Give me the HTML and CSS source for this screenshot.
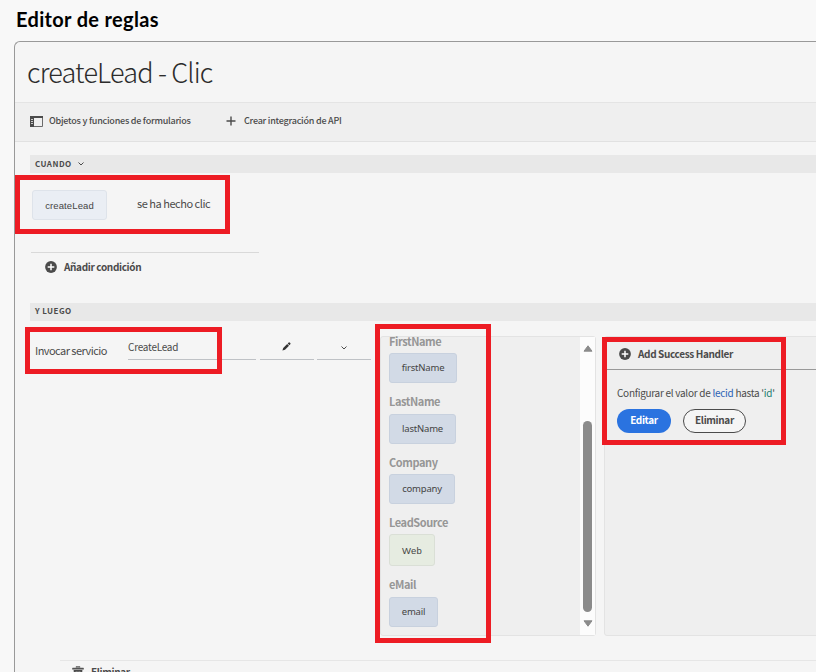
FILE: index.html
```html
<!DOCTYPE html>
<html lang="es">
<head>
<meta charset="utf-8">
<title>Editor de reglas</title>
<link rel="stylesheet" href="styles.css">
</head>
<body>
<h1 class="page-title">Editor de reglas</h1>
<main class="editor">
  <header class="rule-head"><h2 class="rule-name">createLead - Clic</h2></header>
  <nav class="toolbar">
    <a class="tool tool-objects">
      <svg width="13" height="11" viewBox="0 0 13 11"><path d="M.5.5h12v10H.5z" fill="none" stroke="#6b6b6b"/><path d="M0 0h13v2H0zM0 2h4v9H0z" fill="#4b4b4b"/><path d="M1 3.5h2M1 5.5h2M1 7.5h2" stroke="#ccc"/></svg>
      <span>Objetos y funciones de formularios</span>
    </a>
    <a class="tool tool-api">
      <svg width="10" height="10" viewBox="0 0 10 10"><path d="M5 .5v9M.5 5h9" stroke="#4b4b4b" stroke-width="1.4"/></svg>
      <span>Crear integración de API</span>
    </a>
  </nav>
  <section class="when">
    <h3 class="band">CUANDO <svg width="6" height="4" viewBox="0 0 6 4"><path d="M.5.5 3 3 5.5.5" fill="none" stroke="#4b4b4b"/></svg></h3>
    <div class="condition"><span class="chip chip-event">createLead</span><span class="event">se ha hecho clic</span></div>
    <div class="add-condition">
      <svg width="12" height="12" viewBox="0 0 12 12"><circle cx="6" cy="6" r="5.9" fill="#4b4b4b"/><path d="M6 2.7v6.6M2.7 6h6.6" stroke="#fff" stroke-width="1.5"/></svg>
      <b>Añadir condición</b>
    </div>
  </section>
  <section class="then">
    <h3 class="band band-then">Y LUEGO</h3>
    <div class="action">
      <span class="invoke">Invocar servicio</span>
      <span class="field service"><span>CreateLead</span></span>
      <span class="field small edit"><svg width="9" height="9" viewBox="0 0 9 9"><path d="M.4 8.6 1.2 6 5.2 2 7 3.8 3 7.8zM5.7 1.5 6.7.6Q7.3.1 7.9.7l.4.4q.5.5 0 1.1L7.4 3.2z" fill="#333"/></svg></span>
      <span class="field small last"><svg width="6" height="4" viewBox="0 0 6 4"><path d="M.5.5 3 3 5.5.5" fill="none" stroke="#4b4b4b"/></svg></span>
      <div class="panel inputs">
        <div class="input-list">
          <label>FirstName</label><span class="chip w1">firstName</span>
          <label class="wide">LastName</label><span class="chip w2">lastName</span>
          <label>Company</label><span class="chip w3">company</span>
          <label>LeadSource</label><span class="chip literal">Web</span>
          <label class="wide">eMail</label><span class="chip w5">email</span>
        </div>
        <div class="scrollbar">
          <svg width="10" height="7" viewBox="0 0 10 7"><path d="M5 .8 9 6.2H1z" fill="#8b8b8b" stroke="#8b8b8b" stroke-linejoin="round"/></svg>
          <i class="thumb"></i>
          <svg width="10" height="7" viewBox="0 0 10 7"><path d="M5 6.2 9 .8H1z" fill="#8b8b8b" stroke="#8b8b8b" stroke-linejoin="round"/></svg>
        </div>
      </div>
      <div class="panel handlers">
        <div class="handler-head">
          <svg width="12" height="12" viewBox="0 0 12 12"><circle cx="6" cy="6" r="5.9" fill="#4b4b4b"/><path d="M6 2.7v6.6M2.7 6h6.6" stroke="#fff" stroke-width="1.5"/></svg>
          <b>Add Success Handler</b>
        </div>
        <p class="handler-text">Configurar el valor de <span class="var">lecid</span> hasta '<span class="lit">id</span>'</p>
        <div class="buttons"><button class="btn primary">Editar</button><button class="btn outline">Eliminar</button></div>
      </div>
    </div>
    <div class="delete-row">
      <svg width="12" height="13" viewBox="0 0 12 13"><path d="M4 1.5V.6h4v.9M.5 2h11v1.3H.5z" fill="#555" stroke="#555" stroke-width=".5"/><path d="M1.6 4h8.8L9.8 13H2.2z" fill="#4b4b4b"/><path d="M4.2 5v7M6 5v7M7.8 5v7" stroke="#aaa" stroke-width=".7"/></svg>
      <b>Eliminar</b>
    </div>
  </section>
</main>
<i class="mark mark-event"></i><i class="mark mark-service"></i><i class="mark mark-inputs"></i><i class="mark mark-handler"></i>
</body>
</html>
```
FILE: styles.css
```css
* { box-sizing: border-box; }
body {
  margin: 0; width: 816px; height: 672px; overflow: hidden; position: relative;
  background: #f8f8f8; color: #4b4b4b;
  font: 10px/14px "Noto Sans CJK SC", "Noto Sans", sans-serif;
}
h1, h2, h3, p { margin: 0; }
b { letter-spacing: -.36px; }
svg { display: block; flex: none; }
.page-title { height: 41px; padding: 7px 0 0 16px; font: bold 20px/24px Lato, sans-serif; letter-spacing: .33px; color: #000; }
.editor { margin-left: 14px; height: 640px; border: 1px solid #999; border-width: 1px 0 0 1px; border-top-left-radius: 6px; background: #f5f5f5; overflow: hidden; }
.rule-head { height: 60px; padding: 14px 0 0 12px; }
.rule-name { font-weight: 300; font-size: 27px; line-height: 32px; letter-spacing: -.82px; color: #2c2c2c; }
.toolbar { height: 40px; display: flex; align-items: center; background: #efefef; border-top: 1px solid #e4e4e4; border-bottom: 1px solid #e1e1e1; padding: 0 0 2px 15px; }
.tool { display: flex; align-items: center; font-weight: 500; font-size: 9px; letter-spacing: -.23px; }
.tool-objects { width: 196px; gap: 6px; }
.tool-api { gap: 8px; }
.when { padding: 13px 0 0 15px; height: 161px; }
.band { height: 18px; background: #e8e8e8; padding: 0 0 0 5px; display: flex; align-items: center; gap: 6px; font: bold 8px/18px "Noto Sans CJK SC", sans-serif; letter-spacing: .45px; }
.band-then { padding-bottom: 2px; line-height: 16px; }
.condition { display: flex; align-items: center; padding: 17px 0 0 2px; height: 47px; }
.chip { display: flex; align-items: center; justify-content: center; height: 30px; border: 1px solid #c8d1de; border-radius: 3px; background: #d2dae6; color: #444; font: 9.5px/14px "Noto Sans", sans-serif; letter-spacing: -.2px; }
.chip-event { width: 75px; background: #eaeef4; border-color: #dee3ea; font-family: "Liberation Sans", sans-serif; letter-spacing: .12px; padding-top: 2px; }
.event { margin: -4px 0 0 30px; font-size: 11px; letter-spacing: -.47px; }
.add-condition { width: 228px; margin: 32px 0 0 1px; border-top: 1px solid #d9d9d9; padding: 7px 0 0 14px; display: flex; align-items: center; gap: 7px; }
.then { padding-left: 15px; }
.action { display: flex; margin-top: 15px; height: 300px; }
.invoke { flex: none; width: 98px; padding: 7px 0 0 5px; font-size: 11px; letter-spacing: -.55px; }
.field { flex: none; display: flex; height: 24px; border-bottom: 1px solid #bfc2c6; margin-right: 4px; letter-spacing: -.25px; }
.service { width: 128px; padding-top: 4px; }
.small { width: 54px; justify-content: center; align-items: center; margin-right: 3px; }
.edit { padding: 0 1px 2px 0; }
.last { margin-right: 9px; }
.panel { background: #efefef; border: 1px solid #e3e3e3; border-radius: 3px; height: 300px; flex: none; }
.inputs { width: 216px; display: flex; justify-content: space-between; }
.input-list { padding-left: 8px; margin-top: -14px; }
.input-list label { display: block; height: 30px; padding-top: 11px; font-weight: 700; font-size: 11px; line-height: 15px; letter-spacing: -.42px; color: #969696; }
.input-list .wide { height: 31px; }
.w1 { width: 68px; } .w2 { width: 67px; } .w3 { width: 66px; } .w5 { width: 49px; }
.literal { width: 46px; height: 32px; padding-top: 1px; background: #e6ece1; border-color: #dadfd6; font-family: "Liberation Sans", sans-serif; letter-spacing: .2px; }
.scrollbar { width: 15px; background: #fcfcfc; display: flex; flex-direction: column; align-items: center; padding: 8px 0; }
.thumb { width: 9px; height: 191px; border-radius: 5px; background: #8b8b8b; margin: 69px 0 8px; }
.handlers { width: 230px; margin-left: 8px; }
.handler-head { height: 33px; margin-left: 2px; padding: 2px 0 0 12px; border-bottom: 1px solid #999; display: flex; align-items: center; gap: 7px; }
.handler-text { padding: 16px 0 0 12px; white-space: nowrap; letter-spacing: -.28px; }
.var { color: #2c62b5; } .lit { color: #268071; }
.buttons { display: flex; gap: 12px; padding: 9px 0 0 12px; }
.btn { height: 24px; padding: 0 0 2px; border-radius: 12px; border: 0; font: bold 10px/14px "Noto Sans CJK SC", sans-serif; letter-spacing: -.36px; }
.primary { width: 54px; background: #2a73e0; color: #fff; }
.outline { width: 63px; border: 1px solid #4b4b4b; background: #f5f5f5; color: #4b4b4b; }
.delete-row { margin: 24px 0 0 30px; padding: 4px 0 0 12px; border-top: 1px solid #e6e6e6; display: flex; align-items: center; gap: 7px; }
.mark { position: absolute; border: 5px solid #ed1c24; }
.mark-event { left: 15px; top: 175px; width: 215px; height: 59px; }
.mark-service { left: 25px; top: 327px; width: 197px; height: 47px; }
.mark-inputs { left: 375px; top: 324px; width: 116px; height: 319px; }
.mark-handler { left: 602px; top: 337px; width: 184px; height: 108px; }
```
